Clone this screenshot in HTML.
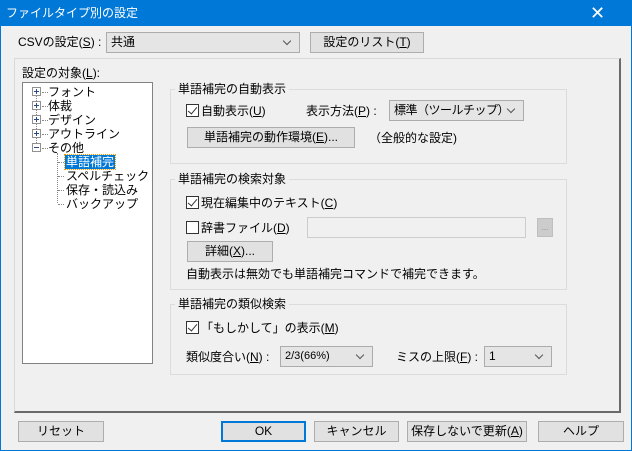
<!DOCTYPE html><html><head><meta charset="utf-8"><style>
*{box-sizing:border-box;margin:0;padding:0}
body{width:632px;height:451px;background:#f0f0f0;font-family:"Liberation Sans","Noto Sans CJK JP",sans-serif;font-size:12px;color:#000;position:relative;overflow:hidden}
.a{position:absolute;white-space:nowrap;line-height:14px}
.win{position:absolute;left:0;top:0;width:632px;height:451px;border:1px solid #0078d7}
.title{position:absolute;left:0;top:0;width:632px;height:26px;background:#0078d7;color:#fff;font-size:12px;line-height:26px;padding-left:6px}
.btn{position:absolute;background:#e1e1e1;border:1px solid #adadad;text-align:center;line-height:19px;height:21px}
.combo{position:absolute;background:#e5e5e5;border:1px solid #acacac;height:21px;line-height:19px;padding-left:4px;white-space:nowrap;overflow:hidden}
.combo:after{content:"";position:absolute;right:9px;top:5px;width:5px;height:5px;border-right:1px solid #555;border-bottom:1px solid #555;transform:rotate(45deg)}
.grp{position:absolute;border:1px solid #dcdcdc}
.gl{position:absolute;background:#f0f0f0;padding:0 3px;line-height:14px;white-space:nowrap}
.cb{position:absolute;width:13px;height:13px;border:1px solid #333;background:#fff}
.cb.c:after{content:"";position:absolute;left:3px;top:0px;width:4px;height:8px;border-right:1.5px solid #333;border-bottom:1.5px solid #333;transform:rotate(40deg)}
.pm{position:absolute;width:9px;height:9px;border:1px solid #919191;background:#fff}
.pm:before{content:"";position:absolute;left:1px;top:3px;width:5px;height:1px;background:#2a4a8a}
.pm.p:after{content:"";position:absolute;left:3px;top:1px;width:1px;height:5px;background:#2a4a8a}
.dh{position:absolute;border-top:1px dotted #888;width:6px}
.dv{position:absolute;border-left:1px dotted #888}
u{text-decoration:underline}
</style></head><body>
<div class="title">ファイルタイプ別の設定</div>
<div class="a" style="left:590px;top:4px;color:#fff;font-size:18px;line-height:18px">✕</div>
<div class="win"></div>
<div class="a" style="left:18px;top:35px">CSVの設定(<u>S</u>) :</div>
<div class="combo" style="left:106px;top:32px;width:194px">共通</div>
<div class="btn" style="left:310px;top:32px;width:114px">設定のリスト(<u>T</u>)</div>
<div style="position:absolute;left:14px;top:58px;width:607px;height:355px;border-top:1px solid #d8d8d8;border-left:1px solid #d8d8d8;border-right:2px solid #6a6a6a;border-bottom:2px solid #6a6a6a"></div>
<div class="a" style="left:22px;top:66px">設定の対象(<u>L</u>):</div>
<div style="position:absolute;left:22px;top:82px;width:131px;height:282px;background:#fff;border:1px solid #828282"></div>
<div class="dv" style="left:36px;top:90px;height:57px"></div>
<div class="pm p" style="left:32px;top:87px"></div><div class="dh" style="left:42px;top:92px"></div><div class="a" style="left:48px;top:85px">フォント</div>
<div class="pm p" style="left:32px;top:101px"></div><div class="dh" style="left:42px;top:106px"></div><div class="a" style="left:48px;top:99px">体裁</div>
<div class="pm p" style="left:32px;top:115px"></div><div class="dh" style="left:42px;top:120px"></div><div class="a" style="left:48px;top:113px">デザイン</div>
<div class="pm p" style="left:32px;top:129px"></div><div class="dh" style="left:42px;top:134px"></div><div class="a" style="left:48px;top:127px">アウトライン</div>
<div class="pm" style="left:32px;top:143px"></div><div class="dh" style="left:42px;top:148px"></div><div class="a" style="left:48px;top:141px">その他</div>
<div class="dv" style="left:57px;top:153px;height:50px"></div>
<div class="dh" style="left:58px;top:162px"></div><div class="a" style="left:65px;top:155px;background:#0078d7;color:#fff;outline:1px dotted #f90;padding:0 1px">単語補完</div>
<div class="dh" style="left:58px;top:176px"></div><div class="a" style="left:66px;top:169px">スペルチェック</div>
<div class="dh" style="left:58px;top:190px"></div><div class="a" style="left:66px;top:183px">保存・読込み</div>
<div class="dh" style="left:58px;top:204px"></div><div class="a" style="left:66px;top:197px">バックアップ</div>

<div class="grp" style="left:170px;top:89px;width:397px;height:75px"></div>
<div class="gl" style="left:175px;top:82px">単語補完の自動表示</div>
<div class="cb c" style="left:186px;top:104px"></div><div class="a" style="left:201px;top:104px">自動表示(<u>U</u>)</div>
<div class="a" style="left:306px;top:104px">表示方法(<u>P</u>) :</div>
<div class="combo" style="left:389px;top:100px;width:135px;letter-spacing:-0.5px">標準（ツールチップ）</div>
<div class="btn" style="left:187px;top:127px;width:168px">単語補完の動作環境(<u>E</u>)...</div>
<div class="a" style="left:369px;top:131px">（全般的な設定)</div>

<div class="grp" style="left:170px;top:179px;width:397px;height:111px"></div>
<div class="gl" style="left:175px;top:172px">単語補完の検索対象</div>
<div class="cb c" style="left:186px;top:196px"></div><div class="a" style="left:201px;top:196px">現在編集中のテキスト(<u>C</u>)</div>
<div class="cb" style="left:186px;top:221px"></div><div class="a" style="left:201px;top:221px">辞書ファイル(<u>D</u>)</div>
<div style="position:absolute;left:307px;top:217px;width:219px;height:21px;background:#f0f0f0;border:1px solid #ccc"></div>
<div style="position:absolute;left:537px;top:218px;width:16px;height:19px;background:#ccc;border:1px solid #bfbfbf;font-size:8px;color:#888;text-align:center;line-height:17px">...</div>
<div class="btn" style="left:187px;top:241px;width:86px">詳細(<u>X</u>)...</div>
<div class="a" style="left:186px;top:267px">自動表示は無効でも単語補完コマンドで補完できます。</div>

<div class="grp" style="left:170px;top:304px;width:397px;height:71px"></div>
<div class="gl" style="left:175px;top:297px">単語補完の類似検索</div>
<div class="cb c" style="left:186px;top:321px"></div><div class="a" style="left:201px;top:321px">「もしかして」の表示(<u>M</u>)</div>
<div class="a" style="left:186px;top:350px">類似度合い(<u>N</u>) :</div>
<div class="combo" style="left:280px;top:346px;width:93px;font-size:11px">2/3(66%)</div>
<div class="a" style="left:396px;top:350px">ミスの上限(<u>F</u>) :</div>
<div class="combo" style="left:484px;top:346px;width:68px">1</div>

<div class="btn" style="left:18px;top:421px;width:86px">リセット</div>
<div class="btn" style="left:221px;top:421px;width:85px;border:2px solid #0078d7;line-height:17px">OK</div>
<div class="btn" style="left:314px;top:421px;width:85px">キャンセル</div>
<div class="btn" style="left:407px;top:421px;width:120px">保存しないで更新(<u>A</u>)</div>
<div class="btn" style="left:538px;top:421px;width:86px">ヘルプ</div>
</body></html>
